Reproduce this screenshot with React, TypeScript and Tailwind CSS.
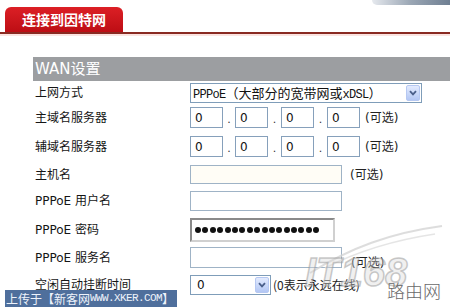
import React from "react";

const Arrow = ({ h }: { h: string }) => (
  <div
    className={`${h} w-[14px] rounded-[2px] border border-[#b6c8f2] bg-linear-to-b from-[#e3ebfe] to-[#b3c7f4] flex items-center justify-center`}
  >
    <svg width="8" height="6" viewBox="0 0 8 6">
      <path d="M1 1.2 L4 4.4 L7 1.2" stroke="#4a5f8a" strokeWidth="1.8" fill="none" />
    </svg>
  </div>
);

const Row = ({
  rowCls,
  fieldCls,
  label,
  children,
}: {
  rowCls: string;
  fieldCls: string;
  label: string;
  children: React.ReactNode;
}) => (
  <div className={`${rowCls} flex items-start`}>
    <div className={`${fieldCls} w-[155px] flex items-center text-[12px] text-[#151515]`}>{label}</div>
    {children}
  </div>
);

const Ip = () => (
  <div className="w-[33px] h-[21px] border border-[#86a0bb] bg-white flex items-center pl-[4px] text-[12px] text-[#111]">
    0
  </div>
);

const Dot = ({ w }: { w: string }) => (
  <div className={`${w} h-[21px] flex items-end justify-center pb-[3px] text-[11px] leading-none text-[#333]`}>.</div>
);

const Opt = ({ cls }: { cls: string }) => (
  <span className={`${cls} text-[12px] text-[#222]`}>(可选)</span>
);

export default function App() {
  return (
    <div
      className="relative w-[450px] h-[307px] overflow-hidden bg-white"
      style={{ fontFamily: '"DejaVu Sans", "Noto Sans CJK SC", sans-serif' }}
    >
      {/* top right fragment */}
      <div className="absolute right-0 top-0 w-[78px] h-[5px] rounded-bl-[40px] bg-linear-to-r from-[#e6e9ee] via-[#9aa6b4] to-[#6f7f92]" />

      {/* header tab */}
      <div className="pt-[7px]">
        <div
          className="ml-[5px] w-[118px] h-[25px] rounded-t-[6px] bg-linear-to-b from-[#dc1f25] to-[#bd0d14] flex items-center pl-[17px] text-white font-bold text-[14px]"
          style={{ fontFamily: '"Noto Sans CJK SC", sans-serif' }}
        >
          连接到因特网
        </div>
        <div className="h-[2px] bg-[#8a2a22]" />
        <div className="h-[2px] bg-[#fbe4e1]" />
      </div>

      {/* WAN bar */}
      <div className="mt-[21px] ml-[33px] h-[24px] bg-[#9c9ea1] flex items-center pl-[2px] text-white text-[15px]">
        WAN设置
      </div>

      <div className="pl-[35px] mt-[2px]">
        <Row rowCls="h-[24px]" fieldCls="h-[20px]" label="上网方式">
          <div className="w-[232px] h-[20px] border border-[#7f9db9] bg-white flex items-center justify-between pl-[2px] pr-[1px]">
            <span className="text-[13px] text-[#111] whitespace-nowrap" style={{ fontFamily: '"Noto Sans CJK SC", sans-serif' }}>
              <span className="text-[12px] tracking-[-0.7px]" style={{ fontFamily: '"Liberation Mono", monospace' }}>PPPoE</span>
              （大部分的宽带网或
              <span className="text-[12px] tracking-[-0.7px]" style={{ fontFamily: '"Liberation Mono", monospace' }}>xDSL</span>）
            </span>
            <Arrow h="h-[16px]" />
          </div>
        </Row>

        <Row rowCls="h-[29px]" fieldCls="h-[21px]" label="主域名服务器">
          <div className="flex items-center">
            <Ip />
            <Dot w="w-[12px]" />
            <Ip />
            <Dot w="w-[13px]" />
            <Ip />
            <Dot w="w-[13px]" />
            <Ip />
            <Opt cls="ml-[5px]" />
          </div>
        </Row>

        <Row rowCls="h-[29px]" fieldCls="h-[21px]" label="辅域名服务器">
          <div className="flex items-center">
            <Ip />
            <Dot w="w-[12px]" />
            <Ip />
            <Dot w="w-[13px]" />
            <Ip />
            <Dot w="w-[13px]" />
            <Ip />
            <Opt cls="ml-[5px]" />
          </div>
        </Row>

        <Row rowCls="h-[26px]" fieldCls="h-[19px]" label="主机名">
          <div className="flex items-center">
            <div className="w-[152px] h-[19px] border border-[#9fb3c6] bg-[#fffdf6]" />
            <Opt cls="ml-[8px]" />
          </div>
        </Row>

        <Row rowCls="h-[27px]" fieldCls="h-[20px]" label="PPPoE 用户名">
          <div className="w-[152px] h-[20px] border border-[#9fb3c6] bg-white" />
        </Row>

        <Row rowCls="h-[29px]" fieldCls="h-[24px]" label="PPPoE 密码">
          <div className="w-[145px] h-[24px] border-2 border-t-[#8a8a8a] border-l-[#8a8a8a] border-r-[#d0d0d0] border-b-[#d0d0d0] bg-white flex items-center pl-[3px] gap-[1.4px]">
            {Array.from({ length: 17 }).map((_, i) => (
              <div key={i} className="w-[6px] h-[6px] rounded-full bg-[#111]" />
            ))}
          </div>
        </Row>

        <Row rowCls="h-[28px]" fieldCls="h-[21px]" label="PPPoE 服务名">
          <div className="flex items-start">
            <div className="w-[152px] h-[21px] border border-[#9fb3c6] bg-white" />
            <Opt cls="ml-[9px] mt-[7px]" />
          </div>
        </Row>

        <Row rowCls="h-[20px]" fieldCls="h-[20px]" label="空闲自动挂断时间">
          <div className="flex items-center">
            <div className="w-[81px] h-[20px] border border-[#7f9db9] bg-white flex items-center justify-between pl-[6px] pr-[1px]">
              <span className="text-[12px] text-[#111]">0</span>
              <Arrow h="h-[16px]" />
            </div>
            <span className="ml-[2px] text-[12px] text-[#222]" style={{ fontFamily: '"Noto Sans CJK SC", sans-serif' }}>
              (0表示永远在线)
            </span>
          </div>
        </Row>
      </div>

      {/* IT168 watermark */}
      <svg className="absolute left-[270px] top-[218px]" width="180" height="80" viewBox="0 0 180 80">
        <path d="M40 55 C 80 30, 120 15, 172 8" stroke="#d4d4d4" strokeWidth="2" fill="none" opacity="0.8" />
        <path d="M55 50 C 90 32, 125 22, 165 16" stroke="#dedede" strokeWidth="1.5" fill="none" opacity="0.8" />
      </svg>
      <div
        className="absolute left-[305px] top-[252px] text-[40px] italic font-bold leading-none text-[rgba(215,215,215,0.4)] [-webkit-text-stroke:1.5px_rgba(150,150,150,0.5)]"
        style={{ fontFamily: '"Liberation Sans", sans-serif' }}
      >
        IT168
      </div>
      <div
        className="absolute left-[387px] top-[281px] text-[18px] leading-none text-[#6a6a6a] font-light"
        style={{ fontFamily: '"Noto Sans CJK SC", sans-serif' }}
      >
        路由网
      </div>

      {/* bottom-left upload watermark */}
      <div
        className="absolute left-[5px] top-[290px] w-[172px] h-[17px] bg-[#4f6f9c] flex items-center pl-[1px] text-[12px] text-[#eef3fb] whitespace-nowrap leading-none"
        style={{ fontFamily: '"Noto Sans CJK SC", sans-serif' }}
      >
        上传于【新客网
        <span className="text-[11px] tracking-[-0.6px]" style={{ fontFamily: '"Liberation Mono", monospace' }}>
          {" "}WWW.XKER.COM
        </span>
        】
      </div>
    </div>
  );
}
